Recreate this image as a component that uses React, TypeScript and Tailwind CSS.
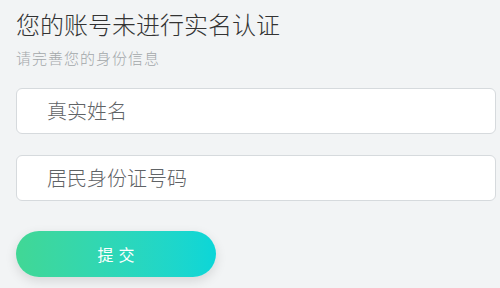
import React from "react";

export default function App() {
  const font = { fontFamily: '"Noto Sans CJK SC", "Microsoft YaHei", sans-serif' };
  return (
    <div className="w-[500px] h-[288px] bg-[#f2f4f5] pl-[16px] pr-[4px] pt-[8px] overflow-hidden" style={font}>
      <div className="text-[24px] leading-[32px] font-light text-[#333333]">您的账号未进行实名认证</div>
      <div className="mt-[8px] text-[15px] leading-[20px] tracking-[1px] font-light text-[#a3a7aa]">请完善您的身份信息</div>
      <div className="mt-[20px] flex flex-col gap-[21px]">
        <div className="h-[46px] rounded-[6px] border border-[#d6dadd] bg-white flex items-center pl-[30px] text-[20px] font-light text-[#5f6366]">
          真实姓名
        </div>
        <div className="h-[46px] rounded-[6px] border border-[#d6dadd] bg-white flex items-center pl-[30px] text-[20px] font-light text-[#5f6366]">
          居民身份证号码
        </div>
      </div>
      <div className="mt-[30px] w-[200px] h-[46px] rounded-full bg-gradient-to-r from-[#41d795] to-[#0bd6d8] shadow-[0_4px_12px_rgba(0,0,0,0.12)] flex items-center justify-center text-white text-[16px] tracking-[5px] pl-[5px]">
        提交
      </div>
    </div>
  );
}
